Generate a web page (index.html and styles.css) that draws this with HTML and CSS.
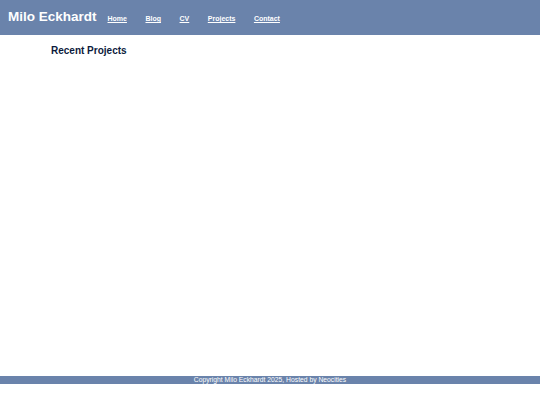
FILE: index.html
```html
<!DOCTYPE html>
<html>
<head>
<meta charset="utf-8">
<link rel="stylesheet" href="styles.css">
</head>
<body>
<header class="site-header">
  <h1 class="site-title">Milo Eckhardt</h1>
  <nav class="site-nav">
    <a href="#">Home</a>
    <a href="#">Blog</a>
    <a href="#">CV</a>
    <a href="#">Projects</a>
    <a href="#">Contact</a>
  </nav>
</header>
<main class="content">
  <h2 class="section-title">Recent Projects</h2>
</main>
<footer class="site-footer">Copyright Milo Eckhardt 2025, Hosted by Neocities</footer>
</body>
</html>
```
FILE: styles.css
```css
html, body {
  margin: 0;
  padding: 0;
  background: #ffffff;
  font-family: "Liberation Sans", Arial, sans-serif;
}
.site-header {
  height: 35px;
  background: #6a83ab;
  display: flex;
  align-items: center;
  padding-left: 8px;
  box-sizing: border-box;
}
.site-title {
  margin: 0;
  font-size: 13.5px;
  font-weight: bold;
  color: #ffffff;
  line-height: 1;
  padding-bottom: 2px;
}
.site-nav {
  display: flex;
  gap: 18.5px;
  margin-left: 11px;
  padding-top: 2px;
}
.site-nav a {
  color: #ffffff;
  font-size: 7px;
  font-weight: bold;
  text-decoration: underline;
}
.content {
  height: 341px;
  padding-left: 51px;
  box-sizing: border-box;
  padding-top: 10px;
}
.section-title {
  margin: 0;
  font-size: 10px;
  font-weight: bold;
  color: #0c1a3c;
}
.site-footer {
  height: 8px;
  line-height: 8px;
  background: #6a83ab;
  color: #ffffff;
  font-size: 6.75px;
  text-align: center;
}
```
